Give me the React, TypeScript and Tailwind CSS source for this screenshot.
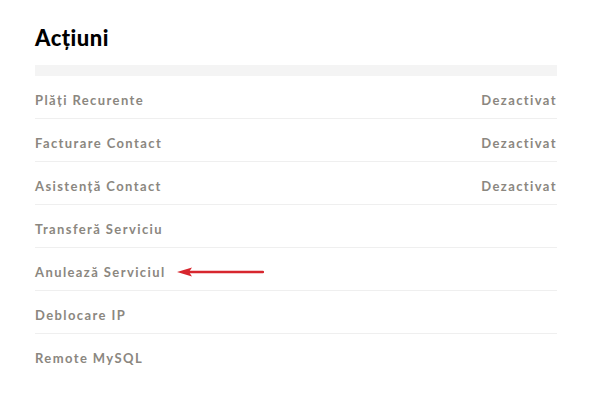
const rows = [
  { label: "Plăți Recurente", value: "Dezactivat" },
  { label: "Facturare Contact", value: "Dezactivat" },
  { label: "Asistență Contact", value: "Dezactivat" },
  { label: "Transferă Serviciu", value: "" },
  { label: "Anulează Serviciul", value: "", arrow: true },
  { label: "Deblocare IP", value: "" },
  { label: "Remote MySQL", value: "" },
];

const App = () => {
  return (
    <div className="min-h-[407px] w-[594px] bg-white font-['Lato',sans-serif]">
      <div className="px-[35px] pt-[24px] w-[592px]">
        <h2 className="text-[22px] font-black leading-[28px] tracking-[0.5px] text-black">Acțiuni</h2>
        <div className="mt-[13px] h-[11px] bg-[#f4f4f4]" />
        <ul>
          {rows.map((row, i) => (
            <li
              key={row.label}
              className={`flex h-[43px] items-start justify-between pt-[14px] text-[13px] font-bold leading-[20px] tracking-[1.4px] text-[#8b877f] ${
                i < rows.length - 1 ? "border-b-[1.5px] border-[#efefef]" : ""
              }`}
            >
              <span className="flex items-center">
                {row.label}
                {row.arrow && (
                  <svg width="87" height="10" viewBox="0 0 87 10" className="ml-[11px]">
                    <line x1="10" y1="5" x2="86" y2="5" stroke="#d7262e" strokeWidth="2.5" strokeLinecap="round" />
                    <path d="M0 5 L15 0.5 L12 5 L15 9.5 Z" fill="#d7262e" />
                  </svg>
                )}
              </span>
              {row.value && <span>{row.value}</span>}
            </li>
          ))}
        </ul>
      </div>
    </div>
  );
};

export default App;
